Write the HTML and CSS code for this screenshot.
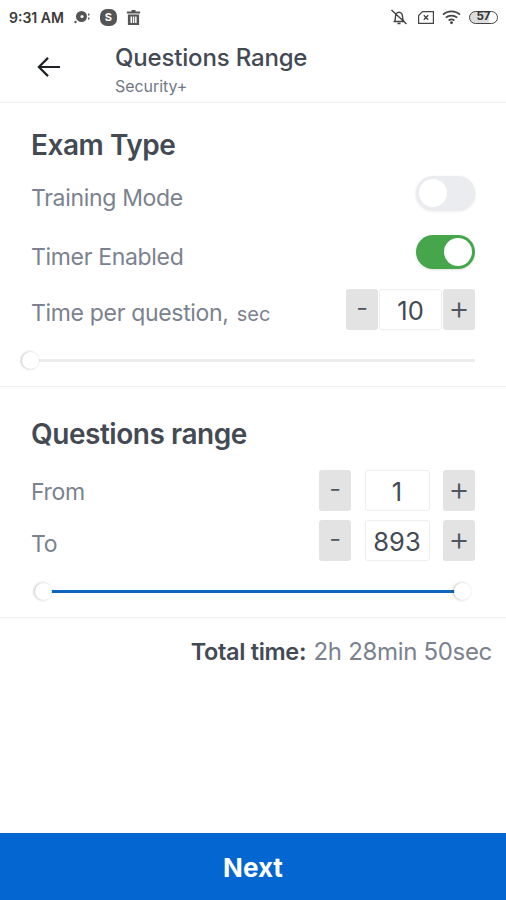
FILE: index.html
```html
<!DOCTYPE html>
<html lang="en">
<head>
<meta charset="utf-8">
<title>Questions Range</title>
<link rel="stylesheet" href="styles.css">
</head>
<body>
<div class="app">
  <div class="status">
    <div class="status-left">
      <span class="clock">9:31 AM</span>
      <svg class="ic-disc" viewBox="0 0 16 14"><circle cx="7.5" cy="6.5" r="5.5" fill="#555"/><circle cx="8" cy="6.5" r="1.5" fill="#fff"/><circle cx="1.5" cy="12" r="1.2" fill="#555"/><rect x="14" y="3.5" width="1.4" height="2" fill="#555"/><rect x="14" y="7.5" width="1.4" height="2" fill="#555"/></svg>
      <span class="ic-s">S</span>
      <svg class="ic-trash" viewBox="0 0 14 15"><path fill="#555" d="M5 0h4v1.4h4.6v2H.4v-2H5zM1.4 4.4h11.2V15H1.4zM4 6.4v6.6h1.5V6.4zm2.3 0v6.6h1.5V6.4zm2.3 0v6.6h1.5V6.4z" fill-rule="evenodd"/></svg>
    </div>
    <div class="status-right">
      <svg class="ic-bell" viewBox="0 0 18 18"><path fill="none" stroke="#444" stroke-width="1.4" d="M4.5 13.5c1-1.5 1-3 1-5 0-2.3 1.500-4.300 3.500-4.300s3.500 2 3.500 4.300c0 2 0 3.500 1.500 5zM7.500 15.500h3M1.500 2l15 14"/></svg>
      <svg class="ic-sim" viewBox="0 0 16 13"><path fill="none" stroke="#444" stroke-width="1.200" d="M4.500 .6H15.400V12.400H.6V4.500z"/><path fill="none" stroke="#444" stroke-width="1.400" d="M5.800 4.300l4.400 4.400M10.200 4.300L5.800 8.700"/></svg>
      <svg class="ic-wifi" viewBox="0 0 20 16"><g fill="none" stroke="#444" stroke-width="1.800"><path d="M1 5.500c5-4.700 13-4.700 18 0"/><path d="M4 8.700c3.400-3 8.600-3 12 0"/><path d="M7 11.700c1.800-1.400 4.200-1.400 6 0"/></g><circle cx="10" cy="14" r="1.500" fill="#444"/></svg>
      <span class="battery"><span class="battery-num">57</span></span>
    </div>
  </div>

  <header class="header">
    <button class="back" aria-label="Back">
      <svg viewBox="0 0 26 24"><path fill="none" stroke="#1f2328" stroke-width="2.300" d="M25 12H3M12.500 2.500L3 12l9.500 9.500"/></svg>
    </button>
    <div class="titles">
      <div class="title">Questions Range</div>
      <div class="subtitle">Security+</div>
    </div>
  </header>

  <section class="exam">
    <h2>Exam Type</h2>
    <div class="row row-training">
      <span class="label">Training Mode</span>
      <span class="toggle"><span class="knob"></span></span>
    </div>
    <div class="row row-timer">
      <span class="label">Timer Enabled</span>
      <span class="toggle on"><span class="knob"></span></span>
    </div>
    <div class="row row-time">
      <span class="label">Time per question, <small>sec</small></span>
      <div class="stepper tight">
        <span class="step minus">-</span><span class="val wide">10</span><span class="step plus">+</span>
      </div>
    </div>
    <div class="slider slider-time">
      <span class="track"></span>
      <span class="thumb thumb-start"></span>
    </div>
  </section>

  <section class="range">
    <h2>Questions range</h2>
    <div class="row row-from">
      <span class="label">From</span>
      <div class="stepper">
        <span class="step minus">-</span><span class="val">1</span><span class="step plus">+</span>
      </div>
    </div>
    <div class="row row-to">
      <span class="label">To</span>
      <div class="stepper">
        <span class="step minus">-</span><span class="val">893</span><span class="step plus">+</span>
      </div>
    </div>
    <div class="slider slider-range">
      <span class="track blue"></span>
      <span class="thumb thumb-start"></span>
      <span class="thumb thumb-end"></span>
    </div>
  </section>

  <div class="total"><b>Total time:</b> <span>2h 28min 50sec</span></div>

  <div class="spacer"></div>
  <button class="next">Next</button>
</div>
</body>
</html>
```
FILE: styles.css
```css
* { box-sizing: border-box; }
html, body { margin: 0; padding: 0; background: #fff; }
body { font-family: Inter, "Liberation Sans", sans-serif; color: #434a54; }
.app { width: 506px; height: 900px; display: flex; flex-direction: column; overflow: hidden; }

.status { height: 34px; flex: none; display: flex; justify-content: space-between; align-items: center; padding: 0 8px 0 9px; }
.status-left, .status-right { display: flex; align-items: center; }
.clock { font-size: 14px; font-weight: 600; color: #3a3a3a; margin-right: 10px; }
.ic-disc { width: 16px; height: 14px; margin-right: 10px; }
.ic-s { width: 17px; height: 17px; border-radius: 7px; background: #555; color: #fff; font-size: 11px; font-weight: 700; display: flex; align-items: center; justify-content: center; margin-right: 9px; }
.ic-trash { width: 15px; height: 15px; }
.ic-bell { width: 18px; height: 18px; margin-right: 10px; }
.ic-sim { width: 16px; height: 13px; margin-right: 8px; }
.ic-wifi { width: 19px; height: 16px; margin-right: 8px; }
.battery { width: 29px; height: 13px; border: 1.300px solid #444; border-radius: 7px; display: flex; align-items: center; justify-content: center; background: linear-gradient(90deg, #ddd 0 70%, #fff 70%); }
.battery-num { font-size: 11.500px; font-weight: 700; color: #333; line-height: 1; }

.header { height: 69px; flex: none; display: flex; border-bottom: 1px solid #eceef0; }
.back { width: 115px; flex: none; padding: 0 0 3px 36px; border: 0; background: none; display: flex; align-items: center; }
.back svg { width: 25px; height: 24px; }
.titles { padding-top: 9px; }
.title { font-size: 24px; font-weight: 500; line-height: 30px; color: #434a54; letter-spacing: -0.170px; }
.subtitle { font-size: 16px; line-height: 20px; margin-top: 3px; color: #717985; letter-spacing: -0.050px; }

h2 { margin: 0; font-size: 28px; font-weight: 600; line-height: 34px; color: #434a54; letter-spacing: -0.450px; }
.exam { height: 284px; flex: none; padding: 25px 31px 0; border-bottom: 1px solid #eceef0; }
.range { height: 231px; flex: none; padding: 30px 31px 0; border-bottom: 1px solid #eceef0; }

.row { display: flex; justify-content: space-between; align-items: center; }
.label { font-size: 23px; color: #7b828e; letter-spacing: -0.320px; }
.label small { font-size: 20px; margin-left: 2px; letter-spacing: 0; }
.row-training { height: 36px; margin-top: 17px; }
.row-timer { height: 36px; margin-top: 23px; }
.row-time { height: 41px; margin-top: 15px; }
.row-from { height: 41px; margin-top: 19px; }
.row-to { height: 41px; margin-top: 9px; }
.row-training .label, .row-timer .label { margin-top: 2px; }
.row-time .label, .row-to .label { margin-top: 6px; }
.row-from .label { margin-top: 3px; }

.toggle { width: 59px; height: 34px; margin-bottom: 9px; border-radius: 17px; background: #ebecf0; position: relative; box-shadow: 0 1px 3px rgba(0,0,0,.12); }
.knob { position: absolute; left: 3px; top: 3px; width: 28px; height: 28px; border-radius: 50%; background: #fff; }
.toggle.on { background: #46a64c; }
.toggle.on .knob { left: 28px; }

.stepper { display: flex; gap: 13.500px; }
.stepper.tight { gap: 1px; }
.step { width: 32px; height: 41px; border-radius: 3px; background: #e3e3e3; display: flex; align-items: center; justify-content: center; color: #50565f; font-size: 27px; font-weight: 300; line-height: 1; padding-bottom: 4px; }
.step.plus { font-size: 33px; }
.val { width: 65px; height: 41px; border: 1px solid #eceef0; border-radius: 3px; display: flex; align-items: center; justify-content: center; font-size: 25.500px; color: #434a54; padding-top: 1px; }
.val.wide { width: 63px; }

.slider { position: relative; height: 20px; }
.slider-time { margin: 21px 0 0 -9px; }
.slider-range { margin: 21px 0 0 3.500px; width: 436px; }
.track { position: absolute; left: 0; right: 0; top: 8px; height: 3px; background: #ececec; }
.track.blue { background: #0f66c0; left: 8px; right: 8px; }
.thumb { position: absolute; top: 1px; width: 17px; height: 17px; border-radius: 50%; background: #fff; box-shadow: -1px 0 3px rgba(0,0,0,.25); }
.thumb-start { left: 0; }
.thumb-end { right: 0; }

.total { flex: none; padding: 19px 14px 0 0; text-align: right; font-size: 24px; line-height: 30px; letter-spacing: -0.320px; }
.total b { font-weight: 600; font-size: 23.500px; color: #434a54; }
.total span { color: #7b828e; margin-left: 1px; }

.spacer { flex: 1; }
.next { flex: none; height: 67px; border: 0; background: #0466d1; color: #fff; font-family: inherit; font-size: 26px; font-weight: 700; padding: 2px 0 0; }
```
